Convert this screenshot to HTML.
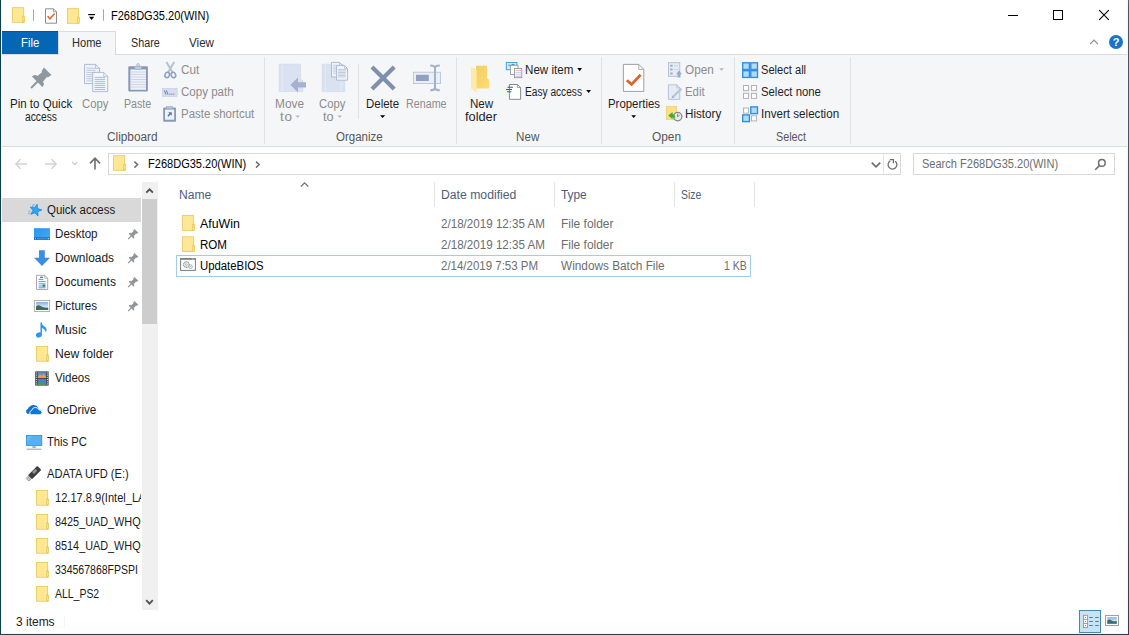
<!DOCTYPE html>
<html lang="en">
<head>
<meta charset="utf-8">
<title>F268DG35.20(WIN)</title>
<style>
html,body{margin:0;padding:0;background:#fff;}
body{width:1129px;height:635px;overflow:hidden;font-family:"Liberation Sans",sans-serif;font-size:12px;}
#win{position:relative;width:1129px;height:635px;overflow:hidden;background:#fff;}
.t{position:absolute;white-space:pre;line-height:14px;font-size:12px;transform-origin:0 0;}
.b{position:absolute;box-sizing:border-box;}
svg{position:absolute;overflow:visible;}
.sep{position:absolute;width:1px;background:#e1e2e3;}
</style>
</head>
<body>
<div id="win">

<!-- window frame (desktop showing at edges) -->
<div class="b" style="left:0;top:0;width:1px;height:635px;background:#0c3e4e"></div>
<div class="b" style="left:1px;top:0;width:1px;height:635px;background:#f0fbfc"></div>
<div class="b" style="left:1127px;top:0;width:1px;height:635px;background:#f0fcfd"></div>
<div class="b" style="left:1128px;top:0;width:1px;height:635px;background:linear-gradient(180deg,#1a7d8f 0,#0e6f80 8px,#086a78 300px,#0a4f63 635px)"></div>
<div class="b" style="left:1px;top:633px;width:1127px;height:1px;background:#f2fbfc"></div>
<div class="b" style="left:0;top:634px;width:1129px;height:1px;background:#074b5f"></div>

<!-- title bar -->
<div id="titlebar">
<span class="t" style="left:110.6px;top:9.2px;color:#000;transform:scaleX(0.919)">F268DG35.20(WIN)</span>
<svg width="1129" height="635" viewBox="0 0 1129 635" style="left:0;top:0;pointer-events:none">
<g transform="translate(12.2,7.3)"><rect x="0.4" y="0.4" width="11.1" height="14.6" fill="#ffe794" stroke="#e8c658" stroke-width="0.8"/><rect x="10.5" y="8.8" width="1.9" height="6.2" fill="#ffe07c" stroke="#e8c658" stroke-width="0.7"/></g>
<path d="M33.5,9.3V20.7M103.5,9.3V20.7" stroke="#a6a6a6" stroke-width="1"/>
<path d="M45.5,8.8 H53.5 L56.5,11.8 V23.200000000000003 H45.5 Z" fill="#fff" stroke="#8c8c8c" stroke-width="1"/><path d="M53.5,8.8 V11.8 H56.5" fill="none" stroke="#8c8c8c" stroke-width="0.8"/>
<path d="M47.6,16.3 L50,18.8 L54.6,13.6" fill="none" stroke="#e4632d" stroke-width="1.5"/>
<g transform="translate(67,8.3)"><rect x="0.4" y="0.4" width="11.1" height="14.6" fill="#ffe794" stroke="#e8c658" stroke-width="0.8"/><rect x="10.5" y="8.8" width="1.9" height="6.2" fill="#ffe07c" stroke="#e8c658" stroke-width="0.7"/></g>
<path d="M88.2,14.6H95" stroke="#000" stroke-width="1.2"/>
<path d="M89,16.8 H94.2 L91.6,20 Z" fill="#000"/>
</svg>
<svg width="1129" height="635" viewBox="0 0 1129 635" style="left:0;top:0;pointer-events:none">
<path d="M1008,15.5H1018" stroke="#000" stroke-width="1"/>
<rect x="1053.5" y="10.5" width="9" height="9" fill="none" stroke="#000" stroke-width="1"/>
<path d="M1099.2,10.2L1108.8,19.8M1108.8,10.2L1099.2,19.8" stroke="#000" stroke-width="1.1"/>
</svg>
</div>

<!-- ribbon tabs -->
<div id="tabs">
<div class="b" style="left:2px;top:31px;width:56px;height:23px;background:#0466b6;border-top:1px solid #0d508f"></div>
<div class="b" style="left:2px;top:54px;width:1125px;height:93px;background:#f5f6f7;border-top:1px solid #dadbdc;border-bottom:1px solid #dadbdc"></div>
<div class="b" style="left:58px;top:31px;width:58px;height:24px;background:#f5f6f7;border:1px solid #dadbdc;border-bottom:none"></div>
<span class="t" style="left:20.8px;top:36.0px;color:#fff;transform:scaleX(0.941)">File</span>
<span class="t" style="left:72.1px;top:36.0px;color:#2b2b2b;transform:scaleX(0.921)">Home</span>
<span class="t" style="left:131.0px;top:36.0px;color:#2b2b2b;transform:scaleX(0.899)">Share</span>
<span class="t" style="left:189.0px;top:36.0px;color:#2b2b2b;transform:scaleX(0.969)">View</span>
<svg width="1129" height="635" viewBox="0 0 1129 635" style="left:0;top:0;pointer-events:none">
<path d="M1090,44.2L1094,40.2L1098,44.2" fill="none" stroke="#8e8e8e" stroke-width="1.2"/>
<circle cx="1116" cy="42" r="7" fill="#1874cd"/>
<text x="1116" y="46" text-anchor="middle" font-family="Liberation Sans, sans-serif" font-weight="bold" font-size="11" fill="#fff">?</text>
</svg>
</div>

<!-- ribbon -->
<div id="ribbon">
<div class="sep" style="left:264px;top:57px;height:87px"></div>
<div class="sep" style="left:358px;top:64px;height:55px"></div>
<div class="sep" style="left:456px;top:57px;height:87px"></div>
<div class="sep" style="left:601px;top:57px;height:87px"></div>
<div class="sep" style="left:734px;top:57px;height:87px"></div>
<div class="sep" style="left:850px;top:57px;height:87px"></div>
<span class="t" style="left:9.7px;top:97.0px;color:#1e1e1e;transform:scaleX(0.961)">Pin to Quick</span>
<span class="t" style="left:24.8px;top:109.8px;color:#1e1e1e;transform:scaleX(0.857)">access</span>
<span class="t" style="left:82.0px;top:96.7px;color:#8c8c8c;transform:scaleX(0.942)">Copy</span>
<span class="t" style="left:123.7px;top:97.0px;color:#8c8c8c;transform:scaleX(0.886)">Paste</span>
<span class="t" style="left:180.9px;top:63.0px;color:#8c8c8c;transform:scaleX(0.974)">Cut</span>
<span class="t" style="left:180.9px;top:85.0px;color:#8c8c8c;transform:scaleX(0.963)">Copy path</span>
<span class="t" style="left:180.9px;top:107.0px;color:#8c8c8c;transform:scaleX(0.954)">Paste shortcut</span>
<span class="t" style="left:107.1px;top:129.8px;color:#565656;transform:scaleX(0.985)">Clipboard</span>
<span class="t" style="left:274.9px;top:97.0px;color:#8c8c8c;transform:scaleX(0.988)">Move</span>
<span class="t" style="left:279.8px;top:109.8px;color:#8c8c8c;transform:scaleX(1.12);letter-spacing:0.7px">to</span>
<span class="t" style="left:319.1px;top:97.0px;color:#8c8c8c;transform:scaleX(0.939)">Copy</span>
<span class="t" style="left:322.8px;top:109.8px;color:#8c8c8c;transform:scaleX(1.058)">to</span>
<span class="t" style="left:365.9px;top:97.0px;color:#1e1e1e;transform:scaleX(0.954)">Delete</span>
<span class="t" style="left:406.2px;top:97.0px;color:#8c8c8c;transform:scaleX(0.895)">Rename</span>
<span class="t" style="left:336.1px;top:129.8px;color:#565656;transform:scaleX(0.959)">Organize</span>
<span class="t" style="left:470.0px;top:97.0px;color:#1e1e1e;transform:scaleX(0.966)">New</span>
<span class="t" style="left:465.4px;top:109.8px;color:#1e1e1e;transform:scaleX(1.066)">folder</span>
<span class="t" style="left:524.7px;top:63.0px;color:#1e1e1e;transform:scaleX(0.968)">New item</span>
<span class="t" style="left:524.7px;top:85.0px;color:#1e1e1e;transform:scaleX(0.846)">Easy access</span>
<span class="t" style="left:516.1px;top:129.8px;color:#565656;transform:scaleX(0.97)">New</span>
<span class="t" style="left:607.7px;top:97.0px;color:#1e1e1e;transform:scaleX(0.951)">Properties</span>
<span class="t" style="left:685.1px;top:63.0px;color:#8c8c8c;transform:scaleX(0.978)">Open</span>
<span class="t" style="left:685.1px;top:85.0px;color:#8c8c8c;transform:scaleX(0.947)">Edit</span>
<span class="t" style="left:685.1px;top:107.0px;color:#1e1e1e;transform:scaleX(0.972)">History</span>
<span class="t" style="left:652.0px;top:129.8px;color:#565656;transform:scaleX(0.988)">Open</span>
<span class="t" style="left:760.9px;top:63.0px;color:#1e1e1e;transform:scaleX(0.926)">Select all</span>
<span class="t" style="left:760.9px;top:85.0px;color:#1e1e1e;transform:scaleX(0.945)">Select none</span>
<span class="t" style="left:760.9px;top:107.0px;color:#1e1e1e;transform:scaleX(0.968)">Invert selection</span>
<span class="t" style="left:776.0px;top:129.8px;color:#565656;transform:scaleX(0.899)">Select</span>
<svg width="1129" height="635" viewBox="0 0 1129 635" style="left:0;top:0;pointer-events:none">
<g transform="translate(40.4,78.6) rotate(45)" fill="#8f989f" stroke="none"><path d="M0,13.2V4" stroke="#8f989f" stroke-width="2" fill="none"/><path d="M-7.4,4.6Q-7.4,0.4 -3.4,0.4H3.4Q7.4,0.4 7.4,4.6Z"/><path d="M-4,1L-3.3,-6.4H3.3L4,1Z"/><path d="M-4.4,-6L-5.3,-10.3H5.3L4.4,-6Z"/></g>
<path d="M84.5,64.4 H95.5 L99.5,68.4 V83.60000000000001 H84.5 Z" fill="#eef2f9" stroke="#a9b6cf" stroke-width="0.9"/><path d="M95.5,64.4 V68.4 H99.5" fill="none" stroke="#a9b6cf" stroke-width="0.7200000000000001"/><path d="M86.5,68.24000000000001H95.5M86.5,70.352H95.5M86.5,72.464H95.5M86.5,74.57600000000001H95.5M86.5,76.688H95.5M86.5,78.80000000000001H95.5M86.5,80.912H95.5" stroke="#bcc7dc" stroke-width="0.9"/><path d="M92.7,72.4 H103.7 L107.7,76.4 V91.60000000000001 H92.7 Z" fill="#f3f6fb" stroke="#a9b6cf" stroke-width="0.9"/><path d="M103.7,72.4 V76.4 H107.7" fill="none" stroke="#a9b6cf" stroke-width="0.7200000000000001"/><path d="M94.7,77.39200000000001H105.2M94.7,79.408H105.2M94.7,81.424H105.2M94.7,83.44H105.2M94.7,85.456H105.2M94.7,87.47200000000001H105.2M94.7,89.488H105.2" stroke="#aebbd3" stroke-width="1.0"/>
<rect x="128.3" y="66.2" width="19.6" height="25.4" rx="1" fill="#8899b8"/><rect x="130.4" y="69.4" width="15.6" height="20.4" fill="#eef1f8"/><path d="M130.4,72.0H146M130.4,74.5H146M130.4,77.0H146M130.4,79.5H146M130.4,82.0H146M130.4,84.5H146M130.4,87.0H146" stroke="#cdd5e6" stroke-width="1.0"/><rect x="134.8" y="66.3" width="6.6" height="3.1" rx="0.6" fill="#c3cce0" stroke="#97a6c2" stroke-width="0.6"/><circle cx="138.1" cy="64.9" r="1.3" fill="#f5f6f7" stroke="#97a6c2" stroke-width="0.8"/>
<path d="M166.4,62L172.6,72.6M174.2,62L168,72.6" stroke="#b7c1d2" stroke-width="2" fill="none"/><ellipse cx="167.2" cy="75" rx="2.2" ry="2.7" fill="none" stroke="#8fa0bf" stroke-width="1.5" transform="rotate(25 167.2 75)"/><ellipse cx="173.4" cy="75" rx="2.2" ry="2.7" fill="none" stroke="#8fa0bf" stroke-width="1.5" transform="rotate(-25 173.4 75)"/>
<rect x="162.3" y="88.3" width="14.8" height="8.2" fill="#d5ddee" stroke="#c3cde2" stroke-width="0.6"/><path d="M164.4,90.4L166,94.6M166.4,90.4L168,94.6" stroke="#5d76a6" stroke-width="0.9"/><path d="M169.3,94.2h1.1M171.3,94.2h1.1M173.3,94.2h1.1" stroke="#5d76a6" stroke-width="1"/>
<rect x="163.2" y="107.6" width="12.8" height="14.1" rx="0.8" fill="#8899b8"/><rect x="165" y="109.5" width="9.2" height="10.2" fill="#eef1f8"/><rect x="166.6" y="106.5" width="6" height="2.4" fill="#b7c2d8" stroke="#95a4c0" stroke-width="0.5"/><path d="M168.2,112.2h3.6v3.6l-1.2,-1.2l-2,2.2l-1.2,-1.2l2,-2.2z" fill="#5f749b"/>
<path d="M279.2,64.2H300.6V79.5L302.8,80.5V91.6H279.2Z" fill="#dae2f1" stroke="#cdd6e8" stroke-width="0.6"/><path d="M282.3,64.5V91.3" stroke="#e4eaf5" stroke-width="1"/><path d="M290.4,84.8L298,77.4V82.2H306V87.4H298V92.6Z" fill="#a3b2ce"/>
<path d="M322.2,64.2H343.2V79.5L344.8,80.5V91.6H322.2Z" fill="#dae2f1" stroke="#cdd6e8" stroke-width="0.6"/><path d="M325.3,64.5V91.3M341,64.5V91.3" stroke="#e4eaf5" stroke-width="1"/><path d="M331.5,62.4 H339.5 L342.5,65.4 V77.0 H331.5 Z" fill="#eef2f9" stroke="#a9b6cf" stroke-width="0.9"/><path d="M339.5,62.4 V65.4 H342.5" fill="none" stroke="#a9b6cf" stroke-width="0.7200000000000001"/><path d="M332.96666666666664,65.32H339.56666666666666M332.96666666666664,66.926H339.56666666666666M332.96666666666664,68.532H339.56666666666666M332.96666666666664,70.138H339.56666666666666M332.96666666666664,71.744H339.56666666666666M332.96666666666664,73.35H339.56666666666666" stroke="#bcc7dc" stroke-width="0.6599999999999999"/><path d="M336.6,65.6 H344.6 L347.6,68.6 V80.19999999999999 H336.6 Z" fill="#f3f6fb" stroke="#a9b6cf" stroke-width="0.9"/><path d="M344.6,65.6 V68.6 H347.6" fill="none" stroke="#a9b6cf" stroke-width="0.7200000000000001"/><path d="M338.06666666666666,69.396H345.7666666666667M338.06666666666666,70.92899999999999H345.7666666666667M338.06666666666666,72.46199999999999H345.7666666666667M338.06666666666666,73.99499999999999H345.7666666666667M338.06666666666666,75.52799999999999H345.7666666666667M338.06666666666666,77.06099999999999H345.7666666666667" stroke="#aebbd3" stroke-width="0.7333333333333333"/>
<path d="M295.4,115.4 H300 L297.7,117.8 Z" fill="#b4b4b4"/><path d="M337.4,115.4 H342 L339.7,117.8 Z" fill="#b4b4b4"/>
<path d="M372,66.9L394.2,89M394.2,66.9L372,89" stroke="#7f8fae" stroke-width="4.2" fill="none"/><path d="M380.1,115.2 H385.1 L382.6,118 Z" fill="#000"/>
<rect x="413.4" y="72.2" width="27.2" height="11.4" fill="#e9eef7" stroke="#b3bfd6" stroke-width="0.8"/><rect x="416" y="74.8" width="12.8" height="6.2" fill="#8fa0c0"/><path d="M435,66.4V89.4M430.2,65.6Q434,65.6 435,67.2Q436,65.6 439.8,65.6M430.2,90.2Q434,90.2 435,88.6Q436,90.2 439.8,90.2" fill="none" stroke="#a3b0c8" stroke-width="2"/>
<defs><linearGradient id="nf" x1="0" y1="0" x2="1" y2="1"><stop offset="0" stop-color="#f2cf63"/><stop offset="1" stop-color="#ffdc74"/></linearGradient></defs><path d="M476,65.8H487V78.6L489,79.6V88.4H476Z" fill="url(#nf)"/><path d="M471,66.8L476.6,69.6V92.6L471,88.4Z" fill="#ffe9a8"/>
<rect x="506.3" y="62.5" width="10.6" height="7.2" fill="#d3e8f8" stroke="#3a9ad9" stroke-width="0.9"/><path d="M508.5,65.2h2M511.6,64.4h3" stroke="#2a6fb5" stroke-width="0.8"/><rect x="510.4" y="65.3" width="7.6" height="9.2" fill="#fff" stroke="#8c8c8c" stroke-width="0.8"/><rect x="514.6" y="68.5" width="7.2" height="9.2" fill="#fff" stroke="#8c8c8c" stroke-width="0.8"/><path d="M515.4,70.6H521M515.4,74.8H521" stroke="#f1b8c4" stroke-width="1.0"/><path d="M515.4,72.7H521M515.4,76.6H521" stroke="#b8c8ee" stroke-width="1.0"/><path d="M577.3,68 H582 L579.65,71.2 Z" fill="#000"/>
<path d="M509.4,84.5 H517.6 L520.6,87.5 V99.3 H509.4 Z" fill="#fff" stroke="#8c8c8c" stroke-width="1"/><path d="M517.6,84.5 V87.5 H520.6" fill="none" stroke="#8c8c8c" stroke-width="0.8"/><path d="M507.5,87.2H513M506,89.5H512M507,91.8H511.4" stroke="#245fae" stroke-width="1.1"/><path d="M586.2,89.9 H591 L588.6,93.1 Z" fill="#000"/>
<path d="M623.4,64.4 H638.8 L643.8,69.4 V91.4 H623.4 Z" fill="#fff" stroke="#969696" stroke-width="0.9"/><path d="M638.8,64.4 V69.4 H643.8" fill="none" stroke="#969696" stroke-width="0.7200000000000001"/><path d="M626.8,80.2L631.6,84.4L640.6,74.8" fill="none" stroke="#e0632a" stroke-width="2.8"/><path d="M631.3,115.2 H636 L633.65,118 Z" fill="#000"/>
<rect x="668.4" y="62.7" width="11.4" height="13.6" fill="#e6ecf6" stroke="#aab7ce" stroke-width="0.8"/><path d="M670.2,64.8h2.4v2h-2.4zM670.2,68.6h2.4v2h-2.4zM670.2,72.4h2.4v2h-2.4z" fill="#9fafcb"/><path d="M674,65.8h4M674,69.6h4" stroke="#c3cde0" stroke-width="0.8"/><path d="M679,70.6L682,74.2H680.4V77.6H677.6V74.2H676Z" fill="#9aaac8"/><path d="M719.2,68.2 H724 L721.6,70.8 Z" fill="#b4b4b4"/>
<path d="M668.4,84.8 H676.8 L679.8,87.8 V99.39999999999999 H668.4 Z" fill="#e6ecf6" stroke="#aab7ce" stroke-width="0.8"/><path d="M676.8,84.8 V87.8 H679.8" fill="none" stroke="#aab7ce" stroke-width="0.6400000000000001"/><path d="M672.6,97.2L681.4,88.6" stroke="#b9c4d9" stroke-width="2.2"/><path d="M671.6,98.2l2.2,-0.6l-1.6,-1.6z" fill="#9aaac8"/>
<rect x="666.3" y="106.5" width="10.4" height="13" fill="#ffe183" stroke="#ecc95f" stroke-width="0.6"/><circle cx="677.7" cy="116.6" r="4.2" fill="#ececec" stroke="#878787" stroke-width="1.3"/><path d="M677.6,113.8V116.8L679.6,115.2" fill="none" stroke="#666" stroke-width="0.8"/><path d="M668.2,115.6L672.6,112V114.2Q675.6,114.4 675.4,118.6Q674.4,116.8 672.6,117V119.2Z" fill="#3dae3d"/>
<rect x="742.7" y="62.800000000000004" width="6.699999999999999" height="6.699999999999999" fill="#b3dbfc" stroke="#338fde" stroke-width="1.4"/><rect x="750.8000000000001" y="62.800000000000004" width="6.699999999999999" height="6.699999999999999" fill="#b3dbfc" stroke="#338fde" stroke-width="1.4"/><rect x="742.7" y="70.7" width="6.699999999999999" height="6.699999999999999" fill="#b3dbfc" stroke="#338fde" stroke-width="1.4"/><rect x="750.8000000000001" y="70.7" width="6.699999999999999" height="6.699999999999999" fill="#b3dbfc" stroke="#338fde" stroke-width="1.4"/>
<rect x="743.5" y="85.5" width="5.1" height="5.1" fill="#fff" stroke="#b2b2b2" stroke-width="1"/><rect x="751.5" y="85.5" width="5.1" height="5.1" fill="#fff" stroke="#b2b2b2" stroke-width="1"/><rect x="743.5" y="93.3" width="5.1" height="5.1" fill="#fff" stroke="#b2b2b2" stroke-width="1"/><rect x="751.5" y="93.3" width="5.1" height="5.1" fill="#fff" stroke="#b2b2b2" stroke-width="1"/>
<rect x="743.5" y="108.0" width="5.1" height="5.1" fill="#fff" stroke="#b2b2b2" stroke-width="1"/><rect x="750.8000000000001" y="106.9" width="6.699999999999999" height="6.699999999999999" fill="#b3dbfc" stroke="#338fde" stroke-width="1.4"/><rect x="742.7" y="114.9" width="6.699999999999999" height="6.699999999999999" fill="#b3dbfc" stroke="#338fde" stroke-width="1.4"/><rect x="751.5" y="115.8" width="5.1" height="5.1" fill="#fff" stroke="#b2b2b2" stroke-width="1"/>
</svg>
</div>

<!-- address bar -->
<div id="address">
<div class="b" style="left:108px;top:153px;width:793px;height:22px;border:1px solid #d9d9d9;background:#fff"></div>
<div class="b" style="left:883px;top:154px;width:1px;height:20px;background:#e5e5e5"></div>
<div class="b" style="left:913px;top:153px;width:202px;height:22px;border:1px solid #d9d9d9;background:#fff"></div>
<span class="t" style="left:147.7px;top:157.0px;color:#000;transform:scaleX(0.92)">F268DG35.20(WIN)</span>
<span class="t" style="left:921.6px;top:157.0px;color:#6d6d6d;transform:scaleX(0.919)">Search F268DG35.20(WIN)</span>
<svg width="1129" height="635" viewBox="0 0 1129 635" style="left:0;top:0;pointer-events:none">
<path d="M27,164H16M20.6,159.2L15.8,164L20.6,168.8" fill="none" stroke="#d2d2d2" stroke-width="1.4"/>
<path d="M45,164H56M51.4,159.2L56.2,164L51.4,168.8" fill="none" stroke="#d2d2d2" stroke-width="1.4"/>
<path d="M72,161.8L74.7,164.6L77.4,161.8" fill="none" stroke="#c4c4c4" stroke-width="1.1"/>
<path d="M95,169.6V158.6M90,163.4L95,158.2L100,163.4" fill="none" stroke="#6e6e6e" stroke-width="1.6"/>
<g transform="translate(113.2,155.3)"><rect x="0.4" y="0.4" width="11.1" height="14.6" fill="#ffe794" stroke="#e8c658" stroke-width="0.8"/><rect x="10.5" y="8.8" width="1.9" height="6.2" fill="#ffe07c" stroke="#e8c658" stroke-width="0.7"/></g>
<path d="M134.4,161.6L137.6,164.6L134.4,167.6M256,161.6L259.2,164.6L256,167.6" fill="none" stroke="#6e6e6e" stroke-width="1.5"/>
<path d="M871.8,162.6L876,166.9L880.2,162.6" fill="none" stroke="#6e6e6e" stroke-width="1.7"/>
<path d="M895.2,161.2A4.4,4.4 0 1 1 890.2,160.9" fill="none" stroke="#6e6e6e" stroke-width="1.3"/><path d="M889.8,159.7H893.4V163.3" fill="none" stroke="#6e6e6e" stroke-width="1.3"/>
<circle cx="1101.9" cy="162.9" r="3.3" fill="none" stroke="#6e6e6e" stroke-width="1.5"/><path d="M1099.4,165.6L1095.2,169.7" stroke="#6e6e6e" stroke-width="1.6"/>
</svg>
</div>

<!-- navigation pane -->
<div id="nav">
<div class="b" style="left:2px;top:198px;width:139px;height:24px;background:#d9d9d9"></div>
<div class="b" style="left:142px;top:182px;width:16px;height:428px;background:#f0f0f0"></div>
<div class="b" style="left:142px;top:199px;width:15px;height:125px;background:#cdcdcd"></div>
<span class="t" style="left:46.9px;top:202.6px;color:#1a1a1a;transform:scaleX(0.956)">Quick access</span>
<span class="t" style="left:55.1px;top:226.6px;color:#1a1a1a;transform:scaleX(0.967)">Desktop</span>
<span class="t" style="left:55.1px;top:250.6px;color:#1a1a1a;transform:scaleX(0.994)">Downloads</span>
<span class="t" style="left:55.1px;top:274.6px;color:#1a1a1a;transform:scaleX(1.005)">Documents</span>
<span class="t" style="left:55.1px;top:298.6px;color:#1a1a1a;transform:scaleX(0.969)">Pictures</span>
<span class="t" style="left:55.1px;top:322.6px;color:#1a1a1a;transform:scaleX(1.011)">Music</span>
<span class="t" style="left:55.1px;top:346.6px;color:#1a1a1a;transform:scaleX(1.016)">New folder</span>
<span class="t" style="left:55.1px;top:370.6px;color:#1a1a1a;transform:scaleX(0.959)">Videos</span>
<span class="t" style="left:47.1px;top:402.6px;color:#1a1a1a;transform:scaleX(0.973)">OneDrive</span>
<span class="t" style="left:47.0px;top:434.6px;color:#1a1a1a;transform:scaleX(0.937)">This PC</span>
<span class="t" style="left:47.0px;top:466.6px;color:#1a1a1a;transform:scaleX(0.927)">ADATA UFD (E:)</span>
<div class="b" style="left:55.1px;top:490.6px;width:86.1px;height:15px;overflow:hidden"><span class="t" style="left:0;top:0;color:#1a1a1a;transform:scaleX(0.922)">12.17.8.9(Intel_LAN)</span></div>
<div class="b" style="left:55.1px;top:514.6px;width:86.1px;height:15px;overflow:hidden"><span class="t" style="left:0;top:0;color:#1a1a1a;transform:scaleX(0.904)">8425_UAD_WHQL</span></div>
<div class="b" style="left:55.1px;top:538.6px;width:86.1px;height:15px;overflow:hidden"><span class="t" style="left:0;top:0;color:#1a1a1a;transform:scaleX(0.904)">8514_UAD_WHQL</span></div>
<span class="t" style="left:54.7px;top:562.8px;color:#1a1a1a;transform:scaleX(0.875)">334567868FPSPI</span>
<span class="t" style="left:54.7px;top:586.6px;color:#1a1a1a;transform:scaleX(0.871)">ALL_PS2</span>
<svg width="1129" height="635" viewBox="0 0 1129 635" style="left:0;top:0;pointer-events:none">
<path d="M146.3,192.7L149.6,189.3L152.9,192.7" fill="none" stroke="#505050" stroke-width="1.8"/>
<path d="M146.2,600.2L149.5,603.6L152.8,600.2" fill="none" stroke="#505050" stroke-width="1.8"/>
<path d="M37.1,204.2L37.7,208.6L41.9,209.9L37.9,211.7L38.0,216.1L34.9,212.9L30.8,214.3L32.9,210.5L30.3,207.0L34.6,207.8Z" fill="#2aa6f4" stroke="#1b7fd2" stroke-width="0.7"/><path d="M32.2,205.3L34.8,204.7M32,206.7L33.8,206.3M28.6,211.2H30.4M28,213.3H30" stroke="#4aa6e8" stroke-width="0.8"/>
<defs><linearGradient id="dk" x1="0" y1="0" x2="1" y2="1"><stop offset="0" stop-color="#2a92ea"/><stop offset="1" stop-color="#45aaf6"/></linearGradient></defs><rect x="34" y="228.2" width="16" height="11.6" fill="url(#dk)"/><rect x="34" y="237.4" width="16" height="2.4" fill="#1667b7"/><path d="M35,238.7h1M47.6,238.7h1.6" stroke="#fff" stroke-width="0.8"/><path d="M37,238.7h9.6" stroke="#8fc4f0" stroke-width="0.5"/>
<g transform="translate(132.8,234.4) rotate(45)" fill="#8e959b"><path d="M0,6.6V2" stroke="#8e959b" stroke-width="1.2" fill="none"/><path d="M-3.6,2.4Q-3.6,0.4 -1.7,0.4H1.7Q3.6,0.4 3.6,2.4Z"/><path d="M-2,0.6L-1.7,-3H1.7L2,0.6Z"/><path d="M-2.3,-2.8L-2.8,-5H2.8L2.3,-2.8Z"/></g><g transform="translate(132.8,258.4) rotate(45)" fill="#8e959b"><path d="M0,6.6V2" stroke="#8e959b" stroke-width="1.2" fill="none"/><path d="M-3.6,2.4Q-3.6,0.4 -1.7,0.4H1.7Q3.6,0.4 3.6,2.4Z"/><path d="M-2,0.6L-1.7,-3H1.7L2,0.6Z"/><path d="M-2.3,-2.8L-2.8,-5H2.8L2.3,-2.8Z"/></g><g transform="translate(132.8,282.4) rotate(45)" fill="#8e959b"><path d="M0,6.6V2" stroke="#8e959b" stroke-width="1.2" fill="none"/><path d="M-3.6,2.4Q-3.6,0.4 -1.7,0.4H1.7Q3.6,0.4 3.6,2.4Z"/><path d="M-2,0.6L-1.7,-3H1.7L2,0.6Z"/><path d="M-2.3,-2.8L-2.8,-5H2.8L2.3,-2.8Z"/></g><g transform="translate(132.8,306.4) rotate(45)" fill="#8e959b"><path d="M0,6.6V2" stroke="#8e959b" stroke-width="1.2" fill="none"/><path d="M-3.6,2.4Q-3.6,0.4 -1.7,0.4H1.7Q3.6,0.4 3.6,2.4Z"/><path d="M-2,0.6L-1.7,-3H1.7L2,0.6Z"/><path d="M-2.3,-2.8L-2.8,-5H2.8L2.3,-2.8Z"/></g>
<path d="M39,250.2H44.8V257.8H50L42,266L34,257.8H39Z" fill="#3b8fe2"/>
<path d="M36.5,275.3 H44.7 L47.7,278.3 V289.5 H36.5 Z" fill="#fff" stroke="#a0a0a0" stroke-width="0.9"/><path d="M44.7,275.3 V278.3 H47.7" fill="none" stroke="#a0a0a0" stroke-width="0.7200000000000001"/><path d="M38.6,279.4h4.6M38.6,281.6h7M38.6,283.8h7M38.6,286h7M38.6,287.8h7" stroke="#3f8ddb" stroke-width="0.9"/><path d="M40.2,277.3h2.6" stroke="#1c62b8" stroke-width="1.2"/><rect x="42.6" y="284.6" width="2.6" height="2" fill="#2b6cb5"/>
<defs><linearGradient id="sky" x1="0" y1="0" x2="0" y2="1"><stop offset="0" stop-color="#7fb2e6"/><stop offset="0.6" stop-color="#d6e8f6"/><stop offset="1" stop-color="#9cc5b3"/></linearGradient></defs><rect x="34.4" y="300.5" width="15.2" height="11" fill="#fff" stroke="#ababab" stroke-width="0.9"/><rect x="36" y="302" width="12.2" height="8" fill="url(#sky)"/><path d="M36,310V306.4Q38.4,304.2 41,306.2Q44,308.2 48.2,307.4V310Z" fill="#3f6c55"/>
<path d="M41.2,322.6V334.4" stroke="#2b97ee" stroke-width="1.5" fill="none"/><path d="M41.2,322.6Q42.4,325.6 45,327Q47.8,329 45.6,332.8Q46.2,329.6 41.2,327.4Z" fill="#2b97ee"/><ellipse cx="38.9" cy="335" rx="3" ry="2.5" fill="#2b97ee" transform="rotate(-20 38.9 335)"/>
<g transform="translate(36.2,346)"><rect x="0.4" y="0.4" width="11.1" height="14.799999999999999" fill="#ffe794" stroke="#e8c658" stroke-width="0.8"/><rect x="10.5" y="9.0" width="1.9" height="6.2" fill="#ffe07c" stroke="#e8c658" stroke-width="0.7"/></g>
<g transform="translate(36.2,490)"><rect x="0.4" y="0.4" width="11.1" height="14.799999999999999" fill="#ffe794" stroke="#e8c658" stroke-width="0.8"/><rect x="10.5" y="9.0" width="1.9" height="6.2" fill="#ffe07c" stroke="#e8c658" stroke-width="0.7"/></g>
<g transform="translate(36.2,514)"><rect x="0.4" y="0.4" width="11.1" height="14.799999999999999" fill="#ffe794" stroke="#e8c658" stroke-width="0.8"/><rect x="10.5" y="9.0" width="1.9" height="6.2" fill="#ffe07c" stroke="#e8c658" stroke-width="0.7"/></g>
<g transform="translate(36.2,538)"><rect x="0.4" y="0.4" width="11.1" height="14.799999999999999" fill="#ffe794" stroke="#e8c658" stroke-width="0.8"/><rect x="10.5" y="9.0" width="1.9" height="6.2" fill="#ffe07c" stroke="#e8c658" stroke-width="0.7"/></g>
<g transform="translate(36.2,562)"><rect x="0.4" y="0.4" width="11.1" height="14.799999999999999" fill="#ffe794" stroke="#e8c658" stroke-width="0.8"/><rect x="10.5" y="9.0" width="1.9" height="6.2" fill="#ffe07c" stroke="#e8c658" stroke-width="0.7"/></g>
<g transform="translate(36.2,586)"><rect x="0.4" y="0.4" width="11.1" height="14.799999999999999" fill="#ffe794" stroke="#e8c658" stroke-width="0.8"/><rect x="10.5" y="9.0" width="1.9" height="6.2" fill="#ffe07c" stroke="#e8c658" stroke-width="0.7"/></g>
<rect x="35.2" y="371.4" width="13.4" height="14.2" fill="#3c3c3c"/><rect x="37.6" y="372.2" width="8.6" height="6" fill="#5b8fd6"/><rect x="37.6" y="379" width="8.6" height="6" fill="#4a7fc8"/><path d="M38,376.4l2,-2.2l2,1.6l1.6,-2l2.4,2.6v1.6h-8z" fill="#e7a23b"/><path d="M37.6,383.8q2,-2.6 4,-1.2q2,1.2 4.6,-0.4v2.8h-8.6z" fill="#4f9a4a"/><path d="M36.4,372.4v12.4M47.4,372.4v12.4" stroke="#e8e8e8" stroke-width="1" stroke-dasharray="1.1 1.1"/>
<path d="M27.4,413.7Q25.8,412.6 26.1,410.8Q26.5,409.2 28,409Q28.3,406.7 30.3,406.3Q31.6,404.9 33.8,405Q36.9,405.1 38.3,407.9L38.3,413.7Z" fill="#0e6fce"/><path d="M31.6,414.8Q29.6,414.6 29.8,412.4Q30,410.8 31.6,410.6Q32.2,407.6 35.2,407.4Q37.6,407.2 38.7,409.6Q41.9,409.6 42,412.4Q42,414.8 40,414.8Z" fill="#1079d6" stroke="#fff" stroke-width="0.9"/><path d="M30.6,415.6H42.6" stroke="#fff" stroke-width="1.4"/>
<rect x="26.4" y="435.4" width="15.4" height="10" fill="#4fb3f6" stroke="#2f8ad6" stroke-width="0.8"/><path d="M27,436L33,436L27,442Z" fill="#6fc2f8" opacity="0.7"/><path d="M32,447h4.4M34.2,445.6V448" stroke="#8a9aa8" stroke-width="1"/><path d="M26.6,449.2H41.6" stroke="#9aa6b2" stroke-width="1.1"/>
<g transform="translate(34.7,472.5) rotate(-45)"><rect x="-10.2" y="-2" width="4" height="4" fill="#d2d2d2" stroke="#7c7c7c" stroke-width="0.6"/><path d="M-9,-0.8h1.2M-9,0.8h1.2" stroke="#555" stroke-width="0.7"/><rect x="-6.6" y="-2.9" width="13.2" height="5.8" rx="1" fill="#3e3e42"/><rect x="-1.6" y="-2.2" width="4.6" height="2.8" fill="#909090"/></g>
</svg>
</div>

<!-- file list -->
<div id="list">
<div class="b" style="left:434px;top:182px;width:1px;height:25px;background:#e5e5e5"></div>
<div class="b" style="left:554px;top:182px;width:1px;height:25px;background:#e5e5e5"></div>
<div class="b" style="left:674px;top:182px;width:1px;height:25px;background:#e5e5e5"></div>
<div class="b" style="left:754px;top:182px;width:1px;height:25px;background:#e5e5e5"></div>
<div class="b" style="left:176px;top:255px;width:575px;height:22px;border:1px solid #a6cbe9"></div>
<span class="t" style="left:179.2px;top:188.0px;color:#4c607a;transform:scaleX(1.006)">Name</span>
<span class="t" style="left:440.8px;top:188.0px;color:#4c607a;transform:scaleX(1.018)">Date modified</span>
<span class="t" style="left:560.7px;top:188.0px;color:#4c607a;transform:scaleX(0.988)">Type</span>
<span class="t" style="left:681.2px;top:188.0px;color:#4c607a;transform:scaleX(0.865)">Size</span>
<span class="t" style="left:199.8px;top:216.9px;color:#000;transform:scaleX(1.029)">AfuWin</span>
<span class="t" style="left:199.8px;top:237.9px;color:#000;transform:scaleX(0.964)">ROM</span>
<span class="t" style="left:199.8px;top:258.9px;color:#000;transform:scaleX(0.945)">UpdateBIOS</span>
<span class="t" style="left:440.8px;top:216.9px;color:#6d6d6d;transform:scaleX(0.968)">2/18/2019 12:35 AM</span>
<span class="t" style="left:440.8px;top:237.9px;color:#6d6d6d;transform:scaleX(0.968)">2/18/2019 12:35 AM</span>
<span class="t" style="left:440.8px;top:258.9px;color:#6d6d6d;transform:scaleX(0.957)">2/14/2019 7:53 PM</span>
<span class="t" style="left:560.7px;top:216.9px;color:#6d6d6d;transform:scaleX(0.996)">File folder</span>
<span class="t" style="left:560.7px;top:237.9px;color:#6d6d6d;transform:scaleX(0.996)">File folder</span>
<span class="t" style="left:560.7px;top:258.9px;color:#6d6d6d;transform:scaleX(0.984)">Windows Batch File</span>
<span class="t" style="left:723.9px;top:258.9px;color:#6d6d6d;transform:scaleX(0.873)">1 KB</span>
<svg width="1129" height="635" viewBox="0 0 1129 635" style="left:0;top:0;pointer-events:none">
<path d="M300.9,186.5L304.6,182.8L308.3,186.5" fill="none" stroke="#6e6e6e" stroke-width="1.1"/>
<g transform="translate(182.2,215.2)"><rect x="0.4" y="0.4" width="11.1" height="14.799999999999999" fill="#ffe794" stroke="#e8c658" stroke-width="0.8"/><rect x="10.5" y="9.0" width="1.9" height="6.2" fill="#ffe07c" stroke="#e8c658" stroke-width="0.7"/></g><g transform="translate(182.2,236.4)"><rect x="0.4" y="0.4" width="11.1" height="14.799999999999999" fill="#ffe794" stroke="#e8c658" stroke-width="0.8"/><rect x="10.5" y="9.0" width="1.9" height="6.2" fill="#ffe07c" stroke="#e8c658" stroke-width="0.7"/></g>
<rect x="180.6" y="258.6" width="14.8" height="11.8" fill="#fff" stroke="#7c7c7c" stroke-width="1"/><rect x="180.1" y="258.1" width="15.8" height="1.7" fill="#808080"/><path d="M192,258.9h0.8M193.4,258.9h0.8" stroke="#e8e8e8" stroke-width="0.7"/><circle cx="186.4" cy="264.6" r="2.8" fill="#f4f4f4" stroke="#8c8c8c" stroke-width="1.1" stroke-dasharray="1.3 0.5"/><circle cx="186.4" cy="264.6" r="0.9" fill="none" stroke="#9a9a9a" stroke-width="0.6"/><circle cx="190.6" cy="266.7" r="1.8" fill="#eef5f9" stroke="#86aec8" stroke-width="0.8"/><circle cx="190.5" cy="266.6" r="0.6" fill="#9fc0d6"/>
</svg>
</div>

<!-- status bar -->
<div id="status">
<span class="t" style="left:15.7px;top:614.5px;color:#1a1a1a;transform:scaleX(0.998)">3 items</span>
<svg width="1129" height="635" viewBox="0 0 1129 635" style="left:0;top:0;pointer-events:none">
<rect x="1079.5" y="610.5" width="21" height="22" fill="#c7e4f7" stroke="#4586b3" stroke-width="1"/>
<rect x="1083.4" y="615.3" width="4.2" height="12.4" fill="#fff" stroke="#8e8e8e" stroke-width="0.8"/><path d="M1083.4,619.4h4.2M1083.4,623.5h4.2" stroke="#8e8e8e" stroke-width="0.8"/><path d="M1085.1,617.4h0.9M1085.1,621.5h0.9" stroke="#7a6a6a" stroke-width="0.9"/><path d="M1085.1,625.6h0.9" stroke="#b03a30" stroke-width="0.9"/><path d="M1089.2,617.5h3.6M1095.2,617.5h3.6M1089.2,621.5h3.6M1095.2,621.5h3.6M1089.2,625.5h3.6M1095.2,625.5h3.6" stroke="#5d7d84" stroke-width="1"/>
<rect x="1105.5" y="615.5" width="13" height="10" fill="#fff" stroke="#a0a0a0" stroke-width="1"/><rect x="1107.2" y="617.2" width="9.6" height="6.6" fill="url(#sky)"/><path d="M1107.2,623.8V620.4Q1109.4,618.6 1111.6,620.4Q1114,621.8 1116.8,621V623.8Z" fill="#3f6c6a"/>
<path d="M64.5,616V627" stroke="#f3f3f3" stroke-width="1"/>
</svg>
</div>

</div>
</body>
</html>
